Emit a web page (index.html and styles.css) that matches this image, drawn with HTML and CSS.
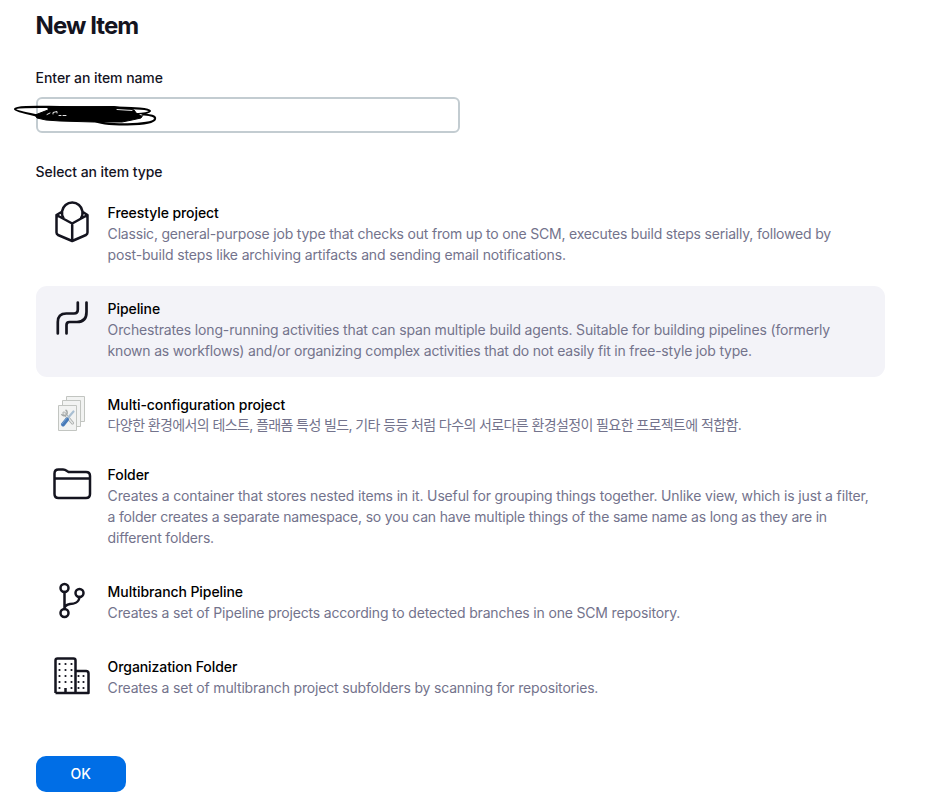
FILE: index.html
```html
<!DOCTYPE html>
<html lang="en">
<head>
<meta charset="utf-8">
<title>New Item</title>
<link rel="stylesheet" href="styles.css">
</head>
<body>
<main class="page">
  <h1 class="title">New Item</h1>
  <div class="label">Enter an item name</div>
  <div class="field">
    <input class="input" type="text" aria-label="Item name">
    <svg class="scribble" viewBox="0 0 160 40" width="160" height="40" fill="none" stroke="#000" stroke-linecap="round" stroke-linejoin="round">
      <path d="M27 20.500C20 19 5 16 5 14C6 11 32 12 50 12L100 12.500C120 13 139 13 140 16C139 19 127 19 119 20" stroke-width="2.200"/>
      <path d="M83 25C94 31 143 31 145 24C146 20 137 20 130 19" stroke-width="2.200"/>
      <path d="M38 12L104 11.500L124 15L127 19L133 20L131 23L122 25L112 27L84 27L50 26L36 25L27 23L25 20L38 15Z" fill="#000" stroke-width="1"/>
      <path d="M37 19.500l3-1.500M43 19v-1.500l4-1v1.500M49 20.500h2M53 20.500h3M107 14.500l15 1M130 19.500l2 .5" stroke="#fff" stroke-width=".9"/>
    </svg>
  </div>
  <div class="label label-type">Select an item type</div>
  <ul class="items">
    <li class="item">
      <svg class="icon" viewBox="0 0 48 48" fill="none" stroke="#14141f" stroke-width="2.500" stroke-linejoin="round" stroke-linecap="round">
        <path d="M8.500 16L24.200 24.500L39.500 16V33.500Q39.500 35 38 36L24.200 42L10 36Q8.500 35 8.500 33.500ZM24.200 24.500V42M8.500 16L13.500 13M39.500 16L34.800 13M15.500 19.200A10.300 10.300 0 1 1 33 19.200"/>
      </svg>
      <div class="text"><h2 class="name">Freestyle project</h2><p class="desc"><span class="tight">Classic, general-purpose job type that checks out from up to one SCM, executes build steps serially, followed by</span><br><span class="loose">post-build steps like archiving artifacts and sending email notifications.</span></p></div>
    </li>
    <li class="item selected">
      <svg class="icon" viewBox="0 0 48 48" fill="none" stroke="#14141f" stroke-width="2.700" stroke-linejoin="round" stroke-linecap="round">
        <path d="M9.800 38.500V27Q9.800 18.500 18.300 18.500H26Q29.800 18.500 29.800 14.500V7.500M18.500 38.500V30Q18.500 27 21.500 27H29Q38.500 27 38.500 17V7.500"/>
      </svg>
      <div class="text"><h2 class="name">Pipeline</h2><p class="desc"><span class="loose">Orchestrates long-running activities that can span multiple build agents. Suitable for building pipelines (formerly</span><br><span class="tight">known as workflows) and/or organizing complex activities that do not easily fit in free-style job type.</span></p></div>
    </li>
    <li class="item">
      <svg class="icon" viewBox="0 0 48 48">
        <g fill="#f2f3f2" stroke="#c2c5c1" stroke-width="1"><path d="M18.500 5.500h18v25h-18z"/><path d="M14.500 9.500h18v26h-18z"/><path d="M10.500 14.500h18v25h-18z"/></g>
        <path d="M16 22L24.500 32" stroke="#a4a8a7" stroke-width="3" stroke-linecap="round"/>
        <path d="M16 22L24.500 32" stroke="#e5e6e5" stroke-width="1.600" stroke-linecap="round"/>
        <path d="M17.500 19a3 3 0 1 1-4 4" fill="none" stroke="#a4a8a7" stroke-width="1.500"/>
        <path d="M25.500 20.500L19 28" stroke="#a9bfd2" stroke-width="2.200" stroke-linecap="round"/>
        <path d="M19 28.500L15 33.500" stroke="#477ab8" stroke-width="4" stroke-linecap="round"/>
        <path d="M18.500 27.500L14 33" stroke="#79a3d2" stroke-width="1" stroke-linecap="round"/>
      </svg>
      <div class="text"><h2 class="name">Multi-configuration project</h2><p class="desc korean" lang="ko">다양한 환경에서의 테스트, 플래폼 특성 빌드, 기타 등등 처럼 다수의 서로다른 환경설정이 필요한 프로젝트에 적합함.</p></div>
    </li>
    <li class="item folder">
      <svg class="icon" viewBox="0 0 48 48" fill="none" stroke="#14141f" stroke-width="2.500" stroke-linejoin="round">
        <path d="M6.500 12.500Q6.500 8.500 10.500 8.500H15Q17 8.500 19 10L20.500 11H38Q42 11 42 15V33Q42 37 38 37H10.500Q6.500 37 6.500 33ZM6.500 17.500H42"/>
      </svg>
      <div class="text"><h2 class="name">Folder</h2><p class="desc"><span class="loose">Creates a container that stores nested items in it. Useful for grouping things together. Unlike view, which is just a filter,</span><br><span class="tight">a folder creates a separate namespace, so you can have multiple things of the same name as long as they are in</span><br>different folders.</p></div>
    </li>
    <li class="item">
      <svg class="icon" viewBox="0 0 48 48" fill="none" stroke="#14141f" stroke-width="2.500" stroke-linecap="round">
        <circle cx="16.500" cy="10" r="4"/><circle cx="31.500" cy="15" r="4"/><circle cx="16.500" cy="35" r="4"/><path d="M16.500 14V31M31.500 19C31 25 25 26 22 26Q17 27 16.500 30"/>
      </svg>
      <div class="text"><h2 class="name">Multibranch Pipeline</h2><p class="desc">Creates a set of Pipeline projects according to detected branches in one SCM repository.</p></div>
    </li>
    <li class="item">
      <svg class="icon" viewBox="0 0 48 48" fill="none" stroke="#14141f" stroke-width="2.500" stroke-linejoin="round">
        <path d="M7.500 40V7.500Q7.500 5.500 9.500 5.500H25.500Q27.500 5.500 27.500 7.500V40M27.500 18H38Q40.500 18 40.500 20.500V40H7.500M17.500 35V40"/>
        <path d="M11.500 11h.01M17.500 11h.01M23.500 11h.01M11.500 17h.01M17.500 17h.01M23.500 17h.01M11.500 23h.01M17.500 23h.01M23.500 23h.01M11.500 29h.01M17.500 29h.01M23.500 29h.01M11.500 35h.01M23.500 35h.01M30.500 23h.01M35.500 23h.01M30.500 29h.01M35.500 29h.01M30.500 35h.01M35.500 35h.01" stroke-width="2.200" stroke-linecap="round"/>
      </svg>
      <div class="text"><h2 class="name">Organization Folder</h2><p class="desc">Creates a set of multibranch project subfolders by scanning for repositories.</p></div>
    </li>
  </ul>
  <button class="ok" type="button">OK</button>
</main>
</body>
</html>
```
FILE: styles.css
```css
* { box-sizing: border-box; }
body {
  margin: 0;
  background: #fff;
  color: #14141f;
  font: 14px/21px Inter, "Noto Sans CJK KR", sans-serif;
}
.page { width: 885.2px; height: 802px; padding: 10px 0 0 35.6px; }
.title { margin: 0; font-size: 24px; line-height: 31px; font-weight: 650; letter-spacing: -.95px; }
.label { margin-top: 26px; font-weight: 500; letter-spacing: -.07px; }
.label-type { margin-top: 28px; }
.field { position: relative; width: 424.6px; height: 36px; margin-top: 9px; }
.input {
  display: block; width: 424.6px; height: 36px; padding: 0 12px;
  border: 2px solid #c3ccd1; border-radius: 6px; background: #fff; font: inherit;
}
.scribble { position: absolute; left: -25.6px; top: -2px; }
.items { display: grid; gap: 5px; margin: 8px 0 0; padding: 0; list-style: none; }
.item { display: flex; gap: 12px; padding: 12px; min-height: 70px; border-radius: 11px; }
.item:nth-child(-n+2) { height: 91px; }
.item:nth-child(3) { height: 65px; min-height: 0; }
.folder { height: 112px; }
.selected { background: #f3f3f8; }
.icon { flex: none; width: 48px; height: 48px; margin-top: -3px; }
.text { white-space: nowrap; }
.name { margin: 0; color: #000; font-size: 14px; line-height: 21px; font-weight: 500; letter-spacing: -.08px; }
.desc { margin: 0; color: #73738c; letter-spacing: -.175px; }
.tight { letter-spacing: -.195px; }
.loose { letter-spacing: -.152px; }
.korean { letter-spacing: -.61px; line-height: 20px; }
.ok {
  display: block; width: 90px; height: 36px; margin-top: 42px; padding: 0;
  border: 0; border-radius: 10px; background: #006ee6; color: #fff;
  font: 500 14px/36px Inter, sans-serif;
}
```
